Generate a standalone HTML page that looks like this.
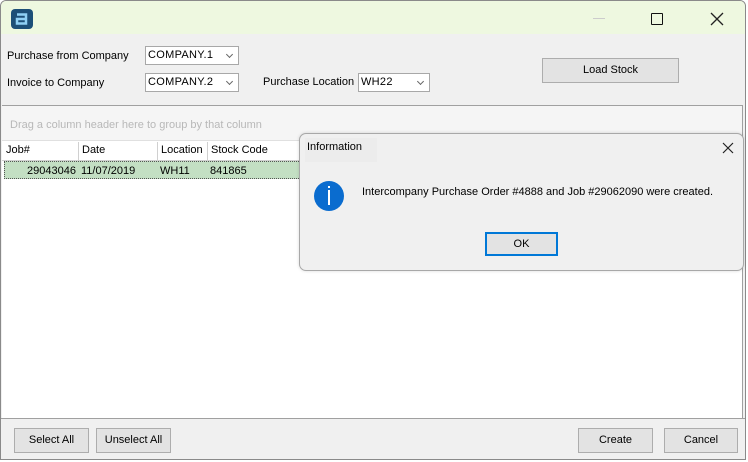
<!DOCTYPE html>
<html><head><style>
*{margin:0;padding:0;box-sizing:border-box}
body{width:748px;height:462px;background:#fff;font-family:"Liberation Sans",sans-serif;font-size:11px;color:#000;position:relative;overflow:hidden}
.a{position:absolute}
.win{left:0;top:0;width:746px;height:460px;background:#f0f0f0;border:1px solid #8a8a8a;border-radius:6px 6px 0 0;overflow:hidden}
.title{left:0;top:0;width:744px;height:33px;background:#eef8e0}
.combo{background:#fff;border:1px solid #a8a8a8;height:19px;padding:2px 0 0 2px;font-size:11px;letter-spacing:.3px}
.combo:after{content:"";position:absolute;right:6px;top:5px;width:4px;height:4px;border-right:1.5px solid #666;border-bottom:1.5px solid #666;transform:rotate(45deg)}
.btn{background:#e3e3e3;border:1px solid #adadad;text-align:center;line-height:22px;font-size:11px}
.hd{top:141px;height:18px;border-right:1px solid #d0d0d0;padding:2px 0 0 3px;font-size:11px}
</style></head><body>
<div class="a win">
 <div class="a title"></div>
 <svg class="a" style="left:10px;top:8px" width="22" height="20" viewBox="0 0 22 20">
  <rect x="0" y="0" width="22" height="20" rx="4" fill="#1c4f78"/>
  <path d="M6 5.5H15V14.5H6V10H15" fill="none" stroke="#8fd0f5" stroke-width="2.5"/>
 </svg>
 <div class="a" style="left:592px;top:17px;width:12px;height:1px;background:#ccc"></div>
 <div class="a" style="left:650px;top:12px;width:12px;height:12px;border:1.5px solid #111;border-radius:1px"></div>
 <svg class="a" style="left:709px;top:11px" width="14" height="14" viewBox="0 0 14 14"><path d="M1 1L13 13M13 1L1 13" stroke="#222" stroke-width="1.3"/></svg>

 <div class="a" style="left:6px;top:49px">Purchase from Company</div>
 <div class="a" style="left:6px;top:76px">Invoice to Company</div>
 <div class="a combo" style="left:144px;top:45px;width:94px">COMPANY.1</div>
 <div class="a combo" style="left:144px;top:72px;width:94px">COMPANY.2</div>
 <div class="a" style="left:262px;top:75px">Purchase Location</div>
 <div class="a combo" style="left:357px;top:72px;width:72px">WH22</div>
 <div class="a btn" style="left:541px;top:57px;width:137px;height:25px">Load Stock</div>

 <div class="a" style="left:1px;top:104px;width:741px;height:314px;background:#fff;border-top:1px solid #a0a0a0;border-right:1px solid #a0a0a0"></div>
 <div class="a" style="left:1px;top:105px;width:740px;height:35px;background:#f5f5f5;border-bottom:1px solid #e0e0e0"></div>
 <div class="a" style="left:9px;top:118px;color:#b8b8b8">Drag a column header here to group by that column</div>
 <div class="a" style="left:1px;top:141px;width:300px;height:19px;background:#fff;border-bottom:1px solid #d0d0d0"></div>
 <div class="a hd" style="left:2px;width:76px">Job#</div>
 <div class="a hd" style="left:78px;width:79px">Date</div>
 <div class="a hd" style="left:157px;width:50px">Location</div>
 <div class="a hd" style="left:207px;width:92px">Stock Code</div>
 <div class="a" style="left:3px;top:160px;width:297px;height:18px;background:#c3dfc3;border:1px dotted #555"></div>
 <div class="a" style="left:26px;top:164px">29043046</div>
 <div class="a" style="left:80px;top:164px">11/07/2019</div>
 <div class="a" style="left:159px;top:164px">WH11</div>
 <div class="a" style="left:209px;top:164px">841865</div>

 <div class="a" style="left:0;top:417px;width:744px;height:1px;background:#a0a0a0"></div>
 <div class="a btn" style="left:13px;top:427px;width:75px;height:25px">Select All</div>
 <div class="a btn" style="left:95px;top:427px;width:75px;height:25px">Unselect All</div>
 <div class="a btn" style="left:577px;top:427px;width:75px;height:25px">Create</div>
 <div class="a btn" style="left:663px;top:427px;width:74px;height:25px">Cancel</div>
</div>

<div class="a" style="left:299px;top:133px;width:445px;height:138px;background:#f0f0f0;border:1px solid #a8a8a8;border-radius:7px;box-shadow:0 0 3px rgba(0,0,0,.15)">
 <div class="a" style="left:5px;top:4px;width:72px;height:24px;background:#ececec"></div>
 <div class="a" style="left:7px;top:7px;font-size:11px">Information</div>
 <svg class="a" style="left:422px;top:8px" width="12" height="12" viewBox="0 0 12 12"><path d="M1 1L11 11M11 1L1 11" stroke="#222" stroke-width="1.2"/></svg>
 <div class="a" style="left:14px;top:47px;width:30px;height:30px;border-radius:50%;background:#0a6ccf"></div>
 <div class="a" style="left:28px;top:56px;width:2px;height:15px;background:#fff"></div>
 <div class="a" style="left:28px;top:52px;width:2px;height:2px;background:#fff"></div>
 <div class="a" style="left:62px;top:52px">Intercompany Purchase Order #4888 and Job #29062090 were created.</div>
 <div class="a btn" style="left:185px;top:98px;width:73px;height:24px;border:2px solid #0078d7;line-height:20px">OK</div>
</div>
</body></html>
